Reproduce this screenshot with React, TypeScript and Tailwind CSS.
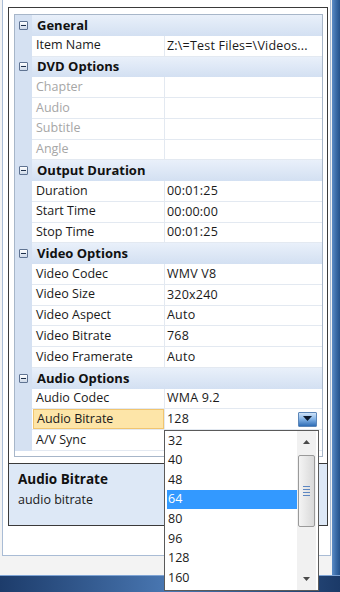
import React from "react";

type Row =
  | { cat: string }
  | { name: string; value?: string; disabled?: boolean; selected?: boolean };

const rows: Row[] = [
  { cat: "General" },
  { name: "Item Name", value: "Z:\\=Test Files=\\Videos..." },
  { cat: "DVD Options" },
  { name: "Chapter", disabled: true },
  { name: "Audio", disabled: true },
  { name: "Subtitle", disabled: true },
  { name: "Angle", disabled: true },
  { cat: "Output Duration" },
  { name: "Duration", value: "00:01:25" },
  { name: "Start Time", value: "00:00:00" },
  { name: "Stop Time", value: "00:01:25" },
  { cat: "Video Options" },
  { name: "Video Codec", value: "WMV V8" },
  { name: "Video Size", value: "320x240" },
  { name: "Video Aspect", value: "Auto" },
  { name: "Video Bitrate", value: "768" },
  { name: "Video Framerate", value: "Auto" },
  { cat: "Audio Options" },
  { name: "Audio Codec", value: "WMA 9.2" },
  { name: "Audio Bitrate", value: "128", selected: true },
  { name: "A/V Sync", value: "" },
];

const bitrates = ["32", "40", "48", "64", "80", "96", "128", "160"];

const MinusBox = () => (
  <div className="w-[9px] h-[9px] border border-[#5f7392] rounded-[1px] bg-gradient-to-b from-white to-[#cdd8e8] flex items-center justify-center">
    <div className="w-[5px] h-[1px] bg-[#1d2f4a]" />
  </div>
);

const GridRow = ({ row }: { row: Row }) => {
  if ("cat" in row) {
    return (
      <div className="flex h-[20.75px] shrink-0">
        <div className="w-[17px] bg-[#d5e1f2] flex items-center justify-center">
          <MinusBox />
        </div>
        <div className="flex-1 flex items-center pl-[5px] bg-gradient-to-b from-[#e9f0fa] to-[#d3e0f2] font-bold text-[13px] text-[#111]">
          {row.cat}
        </div>
      </div>
    );
  }
  return (
    <div className="flex h-[20.75px] shrink-0">
      <div className="w-[17px] bg-[#d5e1f2]" />
      <div className="w-[133px] border-r border-b border-[#e3e9f1] flex">
        <div
          className={
            row.selected
              ? "flex-1 flex items-center pl-[3px] ml-[1px] bg-[#fde5a8] border border-[#f1c56f]"
              : "flex-1 flex items-center pl-[4px]"
          }
        >
          <span className={row.disabled ? "text-[#a6a6a6]" : "text-[#1a1a1a]"}>{row.name}</span>
        </div>
      </div>
      <div className="flex-1 border-b border-[#e3e9f1] flex items-center pl-[2px] text-[#1a1a1a]">
        <span className="flex-1 whitespace-nowrap leading-[16px] tracking-[0.2px]">{row.value}</span>
        {row.selected && (
          <div className="w-[19px] h-[15px] mr-[5px] border border-[#5c86b8] rounded-[1px] bg-gradient-to-b from-[#cfe3f8] via-[#7fb0e4] to-[#2e6db5] flex items-center justify-center">
            <svg width="9" height="6" viewBox="0 0 9 6">
              <path d="M0 0 H9 L4.5 5 Z" fill="#0c1a2e" />
            </svg>
          </div>
        )}
      </div>
    </div>
  );
};

export default function App() {
  return (
    <div className="relative w-[340px] h-[592px] overflow-hidden flex flex-col bg-[#ececec] font-['Open_Sans',sans-serif] text-[12.5px] leading-none">
      <div className="flex h-[575px]">
        <div className="w-[332px] pl-[2px] pr-[1px] bg-[#f3f3f3]">
          <div className="h-[556px] bg-white border-l border-r border-b border-[#a9bcd5] pt-[7px] pl-[5px]">
            <div className="w-[320px] h-[519px] border border-[#3a3a3a] flex flex-col">
              <div className="pt-[6px] pl-[5px] pr-[4px] pb-[6px]">
                <div className="h-[443px] border border-[#a7b6c9] flex flex-col bg-white">
                  {rows.map((r, i) => (
                    <GridRow key={i} row={r} />
                  ))}
                  <div className="flex-1" />
                </div>
              </div>
              <div className="flex-1 border-t border-[#3a3a3a] bg-[#dde8f6] pl-[9px] pt-[7px]">
                <div className="font-bold text-[13.5px] leading-[17px] text-[#111]">Audio Bitrate</div>
                <div className="mt-[3px] leading-[17px] text-[#1a1a1a]">audio bitrate</div>
              </div>
            </div>
          </div>
        </div>
        <div className="w-[8px] bg-gradient-to-r from-[#5c8cc6] via-[#3a6ca8] to-[#25528c]" />
      </div>
      <div className="h-[17px] border-t border-[#7fa4d4] bg-gradient-to-r from-[#1d3c6b] via-[#4a78b3] to-[#1b3a68]" />

      <div className="absolute left-[164px] top-[430px] w-[155px] h-[161px] border border-[#5a5a5a] bg-white flex">
        <div className="w-[132px] flex flex-col">
          {bitrates.map((b) => (
            <div
              key={b}
              className={
                b === "64"
                  ? "h-[19.6px] ml-[2px] pl-[1px] flex items-center bg-[#3399ff] text-white"
                  : "h-[19.6px] ml-[2px] pl-[1px] flex items-center text-[#1a1a1a]"
              }
            >
              {b}
            </div>
          ))}
        </div>
        <div className="w-[19px] bg-[#f1f1f1] flex flex-col items-center">
          <div className="h-[22px] flex items-center justify-center">
            <svg width="7" height="4" viewBox="0 0 7 4">
              <path d="M0 4 L3.5 0 L7 4 Z" fill="#4a4a4a" />
            </svg>
          </div>
          <div className="mt-[2px] w-[17px] h-[72px] rounded-[2px] border border-[#9a9a9a] bg-gradient-to-r from-[#f4f4f4] to-[#d9d9d9] flex flex-col items-center justify-center gap-[2px]">
            <div className="w-[7px] h-[1px] bg-[#5d87c2]" />
            <div className="w-[7px] h-[1px] bg-[#5d87c2]" />
            <div className="w-[7px] h-[1px] bg-[#5d87c2]" />
            <div className="w-[7px] h-[1px] bg-[#5d87c2]" />
          </div>
          <div className="flex-1" />
          <div className="h-[22px] flex items-center justify-center">
            <svg width="7" height="4" viewBox="0 0 7 4">
              <path d="M0 0 L7 0 L3.5 4 Z" fill="#4a4a4a" />
            </svg>
          </div>
        </div>
      </div>
    </div>
  );
}
